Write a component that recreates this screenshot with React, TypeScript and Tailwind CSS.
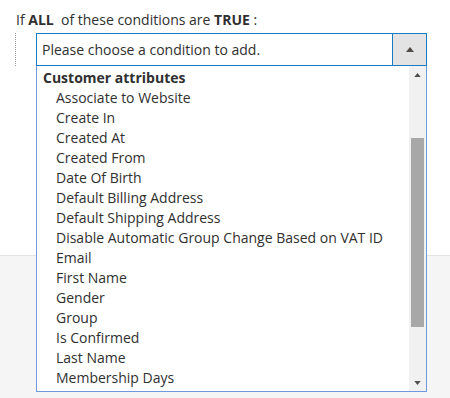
const items = [
  "Associate to Website",
  "Create In",
  "Created At",
  "Created From",
  "Date Of Birth",
  "Default Billing Address",
  "Default Shipping Address",
  "Disable Automatic Group Change Based on VAT ID",
  "Email",
  "First Name",
  "Gender",
  "Group",
  "Is Confirmed",
  "Last Name",
  "Membership Days",
];

function Triangle({ className }: { className?: string }) {
  return (
    <svg width="8" height="5" viewBox="0 0 8 5" className={className}>
      <path d="M0 5 L4 0 L8 5 Z" fill="currentColor" />
    </svg>
  );
}

export default function App() {
  return (
    <div
      className="relative w-[450px] h-[398px] overflow-hidden bg-white text-[14px] text-[#303030]"
      style={{ fontFamily: '"Open Sans", "Noto Sans", sans-serif' }}
    >
      {/* white area with condition row */}
      <div className="h-[256px] border-b border-[#e3e3e3]">
        <p className="pt-[10px] pl-[16px] leading-[20px]">
          If <strong className="font-bold">ALL</strong>&nbsp; of these conditions are{" "}
          <strong className="font-bold">TRUE</strong> :
        </p>
        <div className="ml-[15px] mt-[3px] border-l border-dotted border-[#9a9a9a] pl-[20px] w-fit">
          <div className="flex w-[391px] h-[33px] border border-[#1979c3] bg-white">
            <div className="flex-1 pl-[5px] leading-[32px]">
              Please choose a condition to add.
            </div>
            <div className="w-[34px] border-l border-[#1979c3] bg-[#e3e3e3] flex items-center justify-center text-[#514943]">
              <Triangle />
            </div>
          </div>
        </div>
      </div>
      <div className="h-[142px] bg-[#f5f5f5]" />

      {/* open dropdown list */}
      <div className="absolute left-[36px] top-[66px] w-[391px] h-[326px] border-x border-b border-[#6e99dc] bg-white flex">
        <div className="flex-1 pt-[2px] leading-[20px]">
          <div className="pl-[6px] font-bold">Customer attributes</div>
          {items.map((it) => (
            <div key={it} className="pl-[19px] whitespace-nowrap">
              {it}
            </div>
          ))}
        </div>
        <div className="w-[17px] bg-[#f1f1f1] flex flex-col items-center">
          <div className="h-[17px] flex items-center justify-center text-[#505050]">
            <Triangle className="w-[7px] h-[4px]" />
          </div>
          <div className="mt-[55px] w-[13px] h-[189px] bg-[#a8a8a8]" />
          <div className="flex-1" />
          <div className="h-[17px] flex items-center justify-center text-[#505050]">
            <Triangle className="w-[7px] h-[4px] rotate-180" />
          </div>
        </div>
      </div>
    </div>
  );
}
